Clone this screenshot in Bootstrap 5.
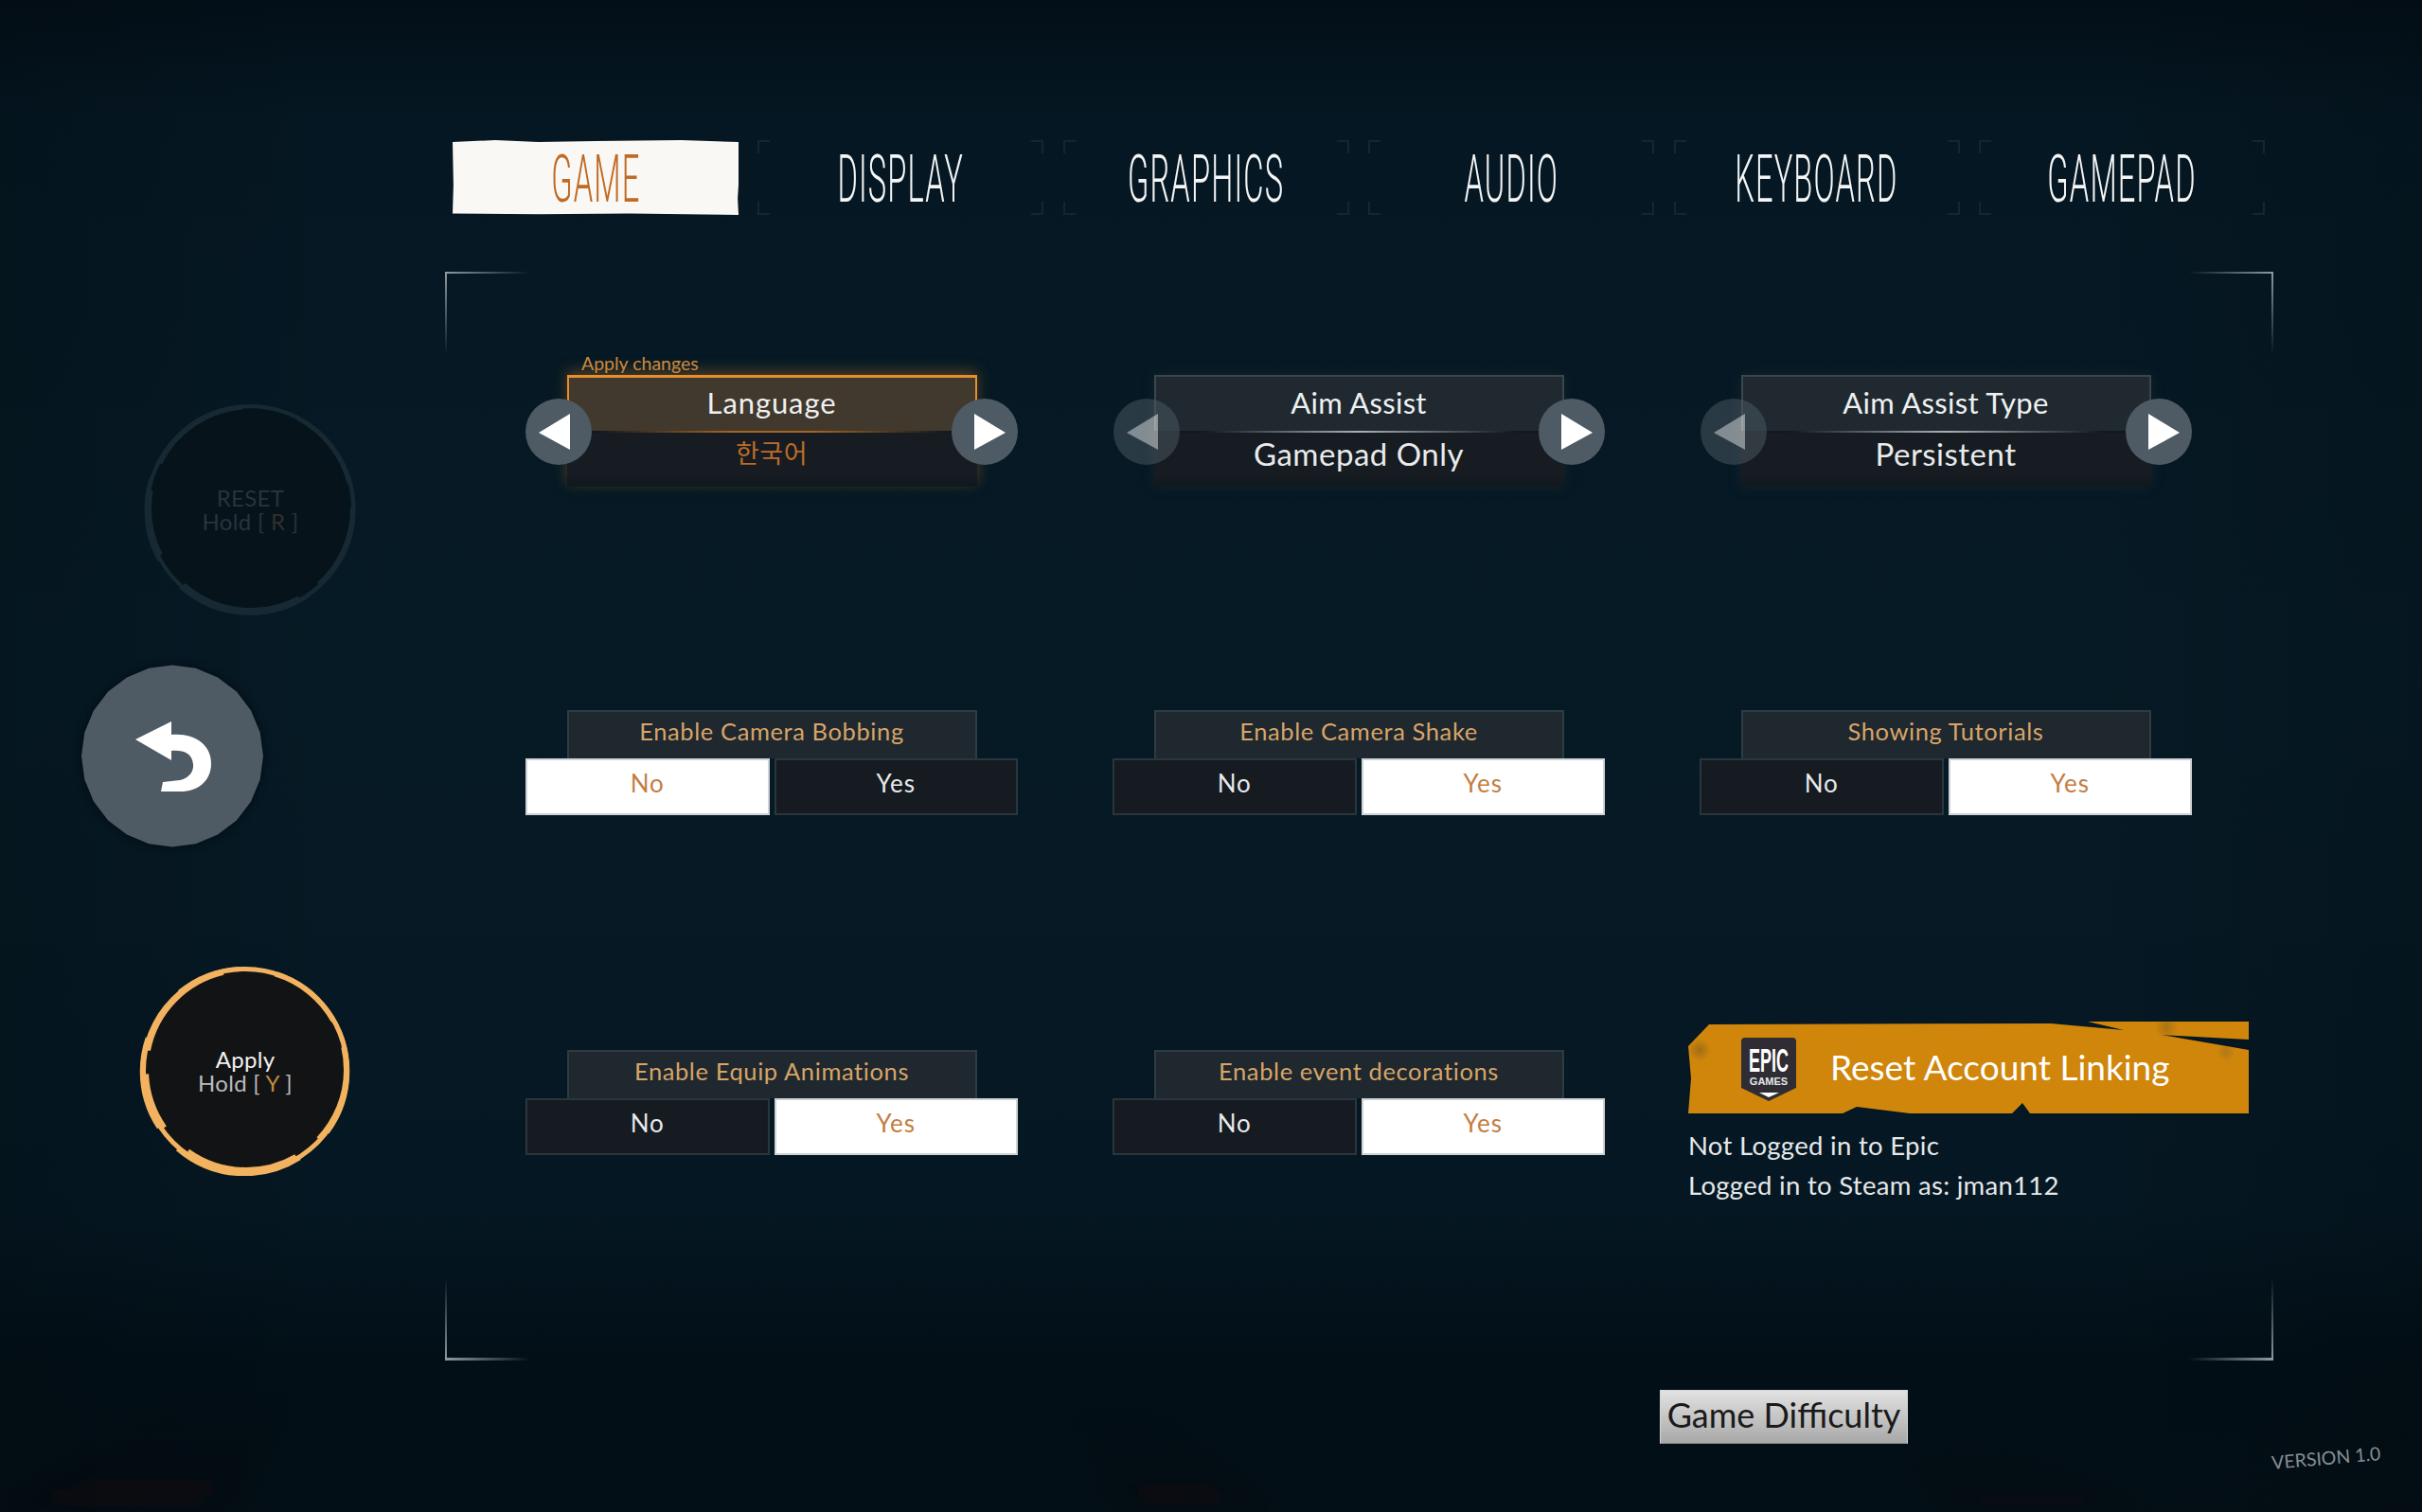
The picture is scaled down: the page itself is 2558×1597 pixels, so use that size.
<!DOCTYPE html>
<html lang="en">
<head>
  <meta charset="UTF-8" />
  <meta name="viewport" content="width=device-width, initial-scale=1.0" />
  <title>Game settings</title>
  <link href="https://cdn.jsdelivr.net/npm/bootstrap@5.3.0/dist/css/bootstrap.min.css" rel="stylesheet" />
  <style>
    /* Page */
    body, html {
      margin: 0;
      padding: 0;
      overflow: hidden;
    }
    body {
      position: relative;
      width: 2558px;
      height: 1597px;
      font-family: "Lato", "Noto Sans CJK KR", sans-serif;
      font-weight: 400;
      color: #e8eaec;
      background:
        linear-gradient(to right, rgba(0, 0, 0, 0.14), transparent 14%, transparent 86%, rgba(0, 0, 0, 0.14)),
        linear-gradient(to bottom, #030f18 0, #051722 8%, #061a25 45%, #051722 80%, #020f17 90%, #030f16 100%);
    }
    .bg-streaks { position: absolute; left: 0; bottom: 0; z-index: -1; }
    .hud-shell { width: 2558px; height: 1597px; }

    /* Left column */
    .hud-side { width: 470px; padding-top: 425px; }
    .round-art { width: 100%; height: 100%; }
    .reset-round { width: 225px; height: 226px; margin-left: 152px; color: #27343c; }
    .back-round { width: 192px; height: 193px; margin-left: 86px; margin-top: 51px; filter: drop-shadow(0 0 5px #020a10); }
    .apply-round { width: 224px; height: 222px; margin-left: 147px; margin-top: 125px; color: #b9bcbd; }
    .round-text { font-size: 24px; line-height: 25px; letter-spacing: 0.3px; }
    .reset-round .key { color: #2f3029; }
    .apply-round .key { color: #bd8a45; }
    .apply-round .top-line { color: #f1f1f1; }

    /* Tabs */
    .hud-main { padding-top: 148px; width: 2088px; }
    .tab-row { margin-left: 8px; gap: 20.4px; height: 79px; }
    .tab-link {
      width: 302px;
      height: 79px;
      padding: 2px 0 0;
      color: #f4f5f5;
      background:
        linear-gradient(#132631, #132631) 0 0 / 13px 2px no-repeat,
        linear-gradient(#132631, #132631) 0 0 / 2px 14px no-repeat,
        linear-gradient(#132631, #132631) 100% 0 / 13px 2px no-repeat,
        linear-gradient(#132631, #132631) 100% 0 / 2px 14px no-repeat,
        linear-gradient(#132631, #132631) 0 100% / 13px 2px no-repeat,
        linear-gradient(#132631, #132631) 0 100% / 2px 14px no-repeat,
        linear-gradient(#132631, #132631) 100% 100% / 13px 2px no-repeat,
        linear-gradient(#132631, #132631) 100% 100% / 2px 14px no-repeat;
    }
    .tab-link:hover { color: #f4f5f5; }
    .tab-link span {
      display: inline-block;
      font-family: "Roboto", sans-serif;
      font-weight: 300;
      font-size: 71px;
      letter-spacing: 2.5px;
      line-height: 1;
      white-space: nowrap;
      transform: scaleX(0.46);
    }
    .tab-link.active, .tab-link.active:hover {
      color: #bf6a25;
      background: #faf8f4;
      clip-path: polygon(0 2px, 15% 0, 30% 2px, 50% 1px, 80% 0, 100% 2px, 100% 60%, 99.7% 78%, 100% 100%, 62% 98%, 30% 99%, 0 98%, 0.3% 60%);
    }

    /* Frame with its four corner marks */
    .setting-frame {
      width: 1931px;
      height: 1150px;
      margin-top: 60px;
      padding: 109px 85px 0;
      display: grid;
      grid-template-columns: repeat(3, 520px);
      grid-template-rows: 354px 359px auto;
      column-gap: 100px;
      --mark: #8f9aa0;
      background:
        linear-gradient(to right, var(--mark), transparent) 0 0 / 90px 2px no-repeat,
        linear-gradient(to bottom, var(--mark), transparent) 0 0 / 2px 88px no-repeat,
        linear-gradient(to left, var(--mark), transparent) 100% 0 / 90px 2px no-repeat,
        linear-gradient(to bottom, var(--mark), transparent) 100% 0 / 2px 88px no-repeat,
        linear-gradient(to right, var(--mark), transparent) 0 100% / 90px 3px no-repeat,
        linear-gradient(to top, var(--mark), transparent) 0 100% / 2px 88px no-repeat,
        linear-gradient(to left, var(--mark), transparent) 100% 100% / 90px 3px no-repeat,
        linear-gradient(to top, var(--mark), transparent) 100% 100% / 2px 88px no-repeat;
    }

    /* Arrow selector */
    .picker { height: 118px; }
    .picker-box { width: 433px; height: 118px; margin: 0 auto; box-shadow: 0 0 12px rgba(40, 52, 58, 0.45); }
    .picker-head {
      height: 59px;
      padding-bottom: 2px;
      font-size: 31px;
      letter-spacing: 0.3px;
      color: #eef0f1;
      background: #1f292f;
      border: 2px solid #39464d;
      border-bottom: 0;
    }
    .picker-value {
      height: 59px;
      padding-bottom: 12px;
      font-size: 33px;
      letter-spacing: 0.5px;
      color: #e9ebec;
      background: linear-gradient(to bottom, #161c21 78%, #11181d);
      border-top: 2px solid transparent;
      border-image: linear-gradient(to right, transparent 12%, #aab1b5 50%, transparent 88%) 1;
    }
    .picker-hot .picker-box { box-shadow: 0 -4px 14px rgba(224, 137, 42, 0.35); }
    .picker-hot .picker-head {
      padding-bottom: 4px;
      letter-spacing: 0.9px;
      background: #41382e;
      border-color: #e78f2d;
      border-top-width: 3px;
    }
    .picker-hot .picker-value {
      color: #bd6c28;
      font-size: 27px;
      border-image: linear-gradient(to right, transparent 8%, #a7651f 40%, #a7651f 60%, transparent 92%) 1;
    }
    .picker-note {
      left: 59px;
      top: -22px;
      font-size: 19.5px;
      line-height: 1;
      color: #c98a40;
    }
    .step-btn { width: 70px; height: 70px; margin-top: 1px; }
    .step-btn svg { display: block; }
    .step-off { opacity: 0.5; margin-left: 1px; }

    /* Yes / No rows */
    .switch-title {
      width: 433px;
      height: 51px;
      margin: 0 auto;
      padding-bottom: 9px;
      font-size: 25.5px;
      letter-spacing: 0.6px;
      color: #d8a468;
      background: #1e282e;
      border: 2px solid #2f3b42;
      border-bottom: 0;
    }
    .switch-row { gap: 5px; }
    .switch-opt {
      flex: 1 1 0;
      height: 60px;
      padding: 0 0 7px;
      font-size: 26px;
      font-weight: 400;
      letter-spacing: 1px;
      color: #e8eaec;
      background: #151b20;
      border: 2px solid #2a363d;
    }
    .switch-opt.switch-on, .switch-opt.switch-on:hover { color: #c47d42; background: #fff; border-color: #cdd3d6; }
    .switch-opt:hover { color: #e8eaec; background: #151b20; border-color: #2a363d; }

    /* Epic block */
    .epic-block { margin-top: -30px; margin-left: -12px; width: 592px; }
    .epic-btn {
      width: 592px;
      height: 97px;
      padding: 0 0 2px 56px;
      gap: 36px;
      color: #fff;
      font-size: 37px;
      font-weight: 400;
      border: 0;
      background:
        radial-gradient(circle 12px at 12px 30px, rgba(120, 90, 30, 0.55), transparent),
        radial-gradient(circle 12px at 505px 6px, rgba(120, 90, 30, 0.45), transparent),
        radial-gradient(circle 10px at 568px 32px, rgba(130, 100, 40, 0.4), transparent),
        #cf860b;
      clip-path: polygon(22px 3px, 383px 2px, 460px 9px, 422px 0, 592px 0, 592px 19px, 500px 14px, 592px 30px, 592px 97px, 361px 97px, 353px 86px, 342px 97px, 234px 97px, 178px 90px, 163px 97px, 0 97px, 3px 60px, 0 26px);
    }
    .epic-btn:hover { color: #fff; background-color: #cf860b; }
    .epic-btn svg { margin-top: 5px; }
    .epic-note { margin: 13px 0 0; font-size: 27.5px; line-height: 42px; letter-spacing: 0.3px; color: #e6e8ea; }

    /* Footer */
    .foot-row { margin-top: 31px; }
    .level-btn {
      width: 262px;
      height: 57px;
      margin-left: 1283px;
      padding: 0 0 5px;
      font-size: 36px;
      font-weight: 400;
      line-height: 1;
      color: #1a1a1a;
      background: linear-gradient(to bottom, #e2e2e2, #a8a8a8);
      border: 1px solid #d5d5d5;
      border-bottom-color: #8c8c8c;
    }
    .level-btn:hover { color: #1a1a1a; background: linear-gradient(to bottom, #e2e2e2, #a8a8a8); }
    .build-tag {
      margin: 62px 44px 0 auto;
      font-size: 19.5px;
      line-height: 1;
      color: #868e93;
      transform: rotate(-5deg);
    }
  </style>
</head>
<body>
  <!-- Faint streaks in the backdrop -->
  <svg class="bg-streaks" width="2558" height="150" viewBox="0 0 2558 150">
    <defs>
      <linearGradient id="streakFade" x1="0" y1="0" x2="0" y2="1">
        <stop offset="0" stop-color="#1a1613" stop-opacity="0" />
        <stop offset="1" stop-color="#1a1613" stop-opacity="0.22" />
      </linearGradient>
      <filter id="streakBlur" x="-30%" y="-30%" width="160%" height="160%"><feGaussianBlur stdDeviation="14" /></filter>
    </defs>
    <g fill="url(#streakFade)" filter="url(#streakBlur)">
      <polygon points="210,0 340,0 245,150 0,150" />
      <polygon points="1110,20 1207,20 1355,150 1175,150" />
      <polygon points="1975,60 2090,60 2285,150 2055,150" />
    </g>
  </svg>

  <div class="hud-shell d-flex">
    <!-- Reset / back / apply -->
    <div class="hud-side d-flex flex-column">
      <div class="reset-round position-relative d-flex align-items-center justify-content-center text-center">
        <svg class="round-art position-absolute top-0 start-0" viewBox="0 0 225 226" fill="none" stroke="#172a33">
          <circle cx="112" cy="113" r="106" fill="#06131b" stroke="none" />
          <circle cx="112.500" cy="113" r="109" stroke-width="4" />
          <circle cx="113" cy="112" r="107" stroke-width="4" stroke-dasharray="90 25 130 40 70 30 110 60" />
          <circle cx="112" cy="113.500" r="110.500" stroke-width="2" stroke-dasharray="60 45 150 35 90 70" />
        </svg>
        <div class="round-text position-relative">RESET<br />Hold [ <span class="key">R</span> ]</div>
      </div>

      <button class="back-round btn border-0 p-0" type="button" aria-label="Back">
        <svg class="round-art d-block" viewBox="0 0 192 193">
          <polygon fill="#4e5b64" points="192,96.5 188.7,121.3 179.1,144.5 163.9,164.4 144,179.6 120.8,189.2 96,192.5 71.2,189.2 48,179.6 28.1,164.4 12.9,144.5 3.3,121.3 0,96.5 3.3,71.7 12.9,48.5 28.1,28.6 48,13.4 71.2,3.8 96,.5 120.8,3.8 144,13.4 163.9,28.6 179.1,48.5 188.7,71.7" />
          <path fill="#fff" d="M57 79 L95 60 L95 74 C120 72 138 85 137 106 C136 124 122 135 102 134 L84 134 L86 124 L104 122 C114 120 119 112 118 105 C117 94 108 90 95 91 L95 101 Z" />
        </svg>
      </button>

      <div class="apply-round position-relative d-flex align-items-center justify-content-center text-center">
        <svg class="round-art position-absolute top-0 start-0" viewBox="0 0 224 222" fill="none" stroke="#f3b25f">
          <circle cx="112" cy="111" r="105" fill="#121314" stroke="none" />
          <circle cx="112" cy="111" r="107.500" stroke-width="5" />
          <circle cx="113" cy="110" r="105" stroke-width="4" stroke-dasharray="80 30 120 35 60 25 120 55" />
          <circle cx="111.500" cy="111.500" r="109.500" stroke-width="2.5" stroke-dasharray="70 40 140 30 100 60" />
        </svg>
        <div class="round-text position-relative"><span class="top-line">Apply</span><br />Hold [ <span class="key">Y</span> ]</div>
      </div>
    </div>

    <div class="hud-main">
      <!-- Tabs -->
      <ul class="nav tab-row">
        <li class="nav-item"><a class="nav-link tab-link active d-flex align-items-center justify-content-center" href="#"><span>GAME</span></a></li>
        <li class="nav-item"><a class="nav-link tab-link d-flex align-items-center justify-content-center" href="#"><span>DISPLAY</span></a></li>
        <li class="nav-item"><a class="nav-link tab-link d-flex align-items-center justify-content-center" href="#"><span>GRAPHICS</span></a></li>
        <li class="nav-item"><a class="nav-link tab-link d-flex align-items-center justify-content-center" href="#"><span>AUDIO</span></a></li>
        <li class="nav-item"><a class="nav-link tab-link d-flex align-items-center justify-content-center" href="#"><span>KEYBOARD</span></a></li>
        <li class="nav-item"><a class="nav-link tab-link d-flex align-items-center justify-content-center" href="#"><span>GAMEPAD</span></a></li>
      </ul>

      <div class="setting-frame">
        <!-- Row 1 -->
        <div class="picker picker-hot position-relative">
          <div class="picker-note position-absolute">Apply changes</div>
          <div class="picker-box">
            <div class="picker-head d-flex align-items-center justify-content-center">Language</div>
            <div class="picker-value d-flex align-items-center justify-content-center">한국어</div>
          </div>
          <button class="step-btn btn border-0 p-0 position-absolute top-50 start-0 translate-middle-y" type="button" aria-label="Previous">
            <svg viewBox="0 0 70 70" width="70" height="70"><ellipse cx="35" cy="35" rx="35" ry="35" fill="#4e5b64" /><polygon fill="#fff" points="14,36 47,16 47,54" /></svg>
          </button>
          <button class="step-btn btn border-0 p-0 position-absolute top-50 end-0 translate-middle-y" type="button" aria-label="Next">
            <svg viewBox="0 0 70 70" width="70" height="70"><ellipse cx="35" cy="35" rx="35" ry="35" fill="#4e5b64" /><polygon fill="#fff" points="57,36 24,16 24,54" /></svg>
          </button>
        </div>

        <div class="picker position-relative">
          <div class="picker-box">
            <div class="picker-head d-flex align-items-center justify-content-center">Aim Assist</div>
            <div class="picker-value d-flex align-items-center justify-content-center">Gamepad Only</div>
          </div>
          <button class="step-btn step-off btn border-0 p-0 position-absolute top-50 start-0 translate-middle-y" type="button" aria-label="Previous">
            <svg viewBox="0 0 70 70" width="70" height="70"><ellipse cx="35" cy="35" rx="35" ry="35" fill="#4e5b64" /><polygon fill="#fff" points="14,36 47,16 47,54" /></svg>
          </button>
          <button class="step-btn btn border-0 p-0 position-absolute top-50 end-0 translate-middle-y" type="button" aria-label="Next">
            <svg viewBox="0 0 70 70" width="70" height="70"><ellipse cx="35" cy="35" rx="35" ry="35" fill="#4e5b64" /><polygon fill="#fff" points="57,36 24,16 24,54" /></svg>
          </button>
        </div>

        <div class="picker position-relative">
          <div class="picker-box">
            <div class="picker-head d-flex align-items-center justify-content-center">Aim Assist Type</div>
            <div class="picker-value d-flex align-items-center justify-content-center">Persistent</div>
          </div>
          <button class="step-btn step-off btn border-0 p-0 position-absolute top-50 start-0 translate-middle-y" type="button" aria-label="Previous">
            <svg viewBox="0 0 70 70" width="70" height="70"><ellipse cx="35" cy="35" rx="35" ry="35" fill="#4e5b64" /><polygon fill="#fff" points="14,36 47,16 47,54" /></svg>
          </button>
          <button class="step-btn btn border-0 p-0 position-absolute top-50 end-0 translate-middle-y" type="button" aria-label="Next">
            <svg viewBox="0 0 70 70" width="70" height="70"><ellipse cx="35" cy="35" rx="35" ry="35" fill="#4e5b64" /><polygon fill="#fff" points="57,36 24,16 24,54" /></svg>
          </button>
        </div>

        <!-- Row 2 -->
        <div>
          <div class="switch-title d-flex align-items-center justify-content-center">Enable Camera Bobbing</div>
          <div class="switch-row d-flex">
            <button class="switch-opt switch-on btn rounded-0" type="button">No</button>
            <button class="switch-opt btn rounded-0" type="button">Yes</button>
          </div>
        </div>
        <div>
          <div class="switch-title d-flex align-items-center justify-content-center">Enable Camera Shake</div>
          <div class="switch-row d-flex">
            <button class="switch-opt btn rounded-0" type="button">No</button>
            <button class="switch-opt switch-on btn rounded-0" type="button">Yes</button>
          </div>
        </div>
        <div>
          <div class="switch-title d-flex align-items-center justify-content-center">Showing Tutorials</div>
          <div class="switch-row d-flex">
            <button class="switch-opt btn rounded-0" type="button">No</button>
            <button class="switch-opt switch-on btn rounded-0" type="button">Yes</button>
          </div>
        </div>

        <!-- Row 3 -->
        <div>
          <div class="switch-title d-flex align-items-center justify-content-center">Enable Equip Animations</div>
          <div class="switch-row d-flex">
            <button class="switch-opt btn rounded-0" type="button">No</button>
            <button class="switch-opt switch-on btn rounded-0" type="button">Yes</button>
          </div>
        </div>
        <div>
          <div class="switch-title d-flex align-items-center justify-content-center">Enable event decorations</div>
          <div class="switch-row d-flex">
            <button class="switch-opt btn rounded-0" type="button">No</button>
            <button class="switch-opt switch-on btn rounded-0" type="button">Yes</button>
          </div>
        </div>
        <div class="epic-block">
          <button class="epic-btn btn rounded-0 d-flex align-items-center" type="button">
            <svg width="58" height="67" viewBox="0 0 58 67" class="flex-shrink-0">
              <path fill="#2f2d33" d="M4 0 H54 Q58 0 58 4 V53 L29 67 L0 53 V4 Q0 0 4 0Z" />
              <text transform="translate(29 36) scale(0.5 1)" text-anchor="middle" fill="#fff" font-family="Liberation Sans" font-weight="700" font-size="36">EPIC</text>
              <text x="29" y="50" text-anchor="middle" fill="#e6e6e8" font-family="Liberation Sans" font-weight="700" font-size="11">GAMES</text>
              <path fill="#fff" d="M19 58 H40 L29 63Z" />
            </svg>
            <span>Reset Account Linking</span>
          </button>
          <p class="epic-note">Not Logged in to Epic<br />Logged in to Steam as: jman112</p>
        </div>
      </div>

      <div class="foot-row d-flex align-items-start">
        <button class="level-btn btn rounded-0" type="button">Game Difficulty</button>
        <div class="build-tag">VERSION 1.0</div>
      </div>
    </div>
  </div>
  <script src="https://cdn.jsdelivr.net/npm/bootstrap@5.3.0/dist/js/bootstrap.bundle.min.js"></script>
</body>
</html>
